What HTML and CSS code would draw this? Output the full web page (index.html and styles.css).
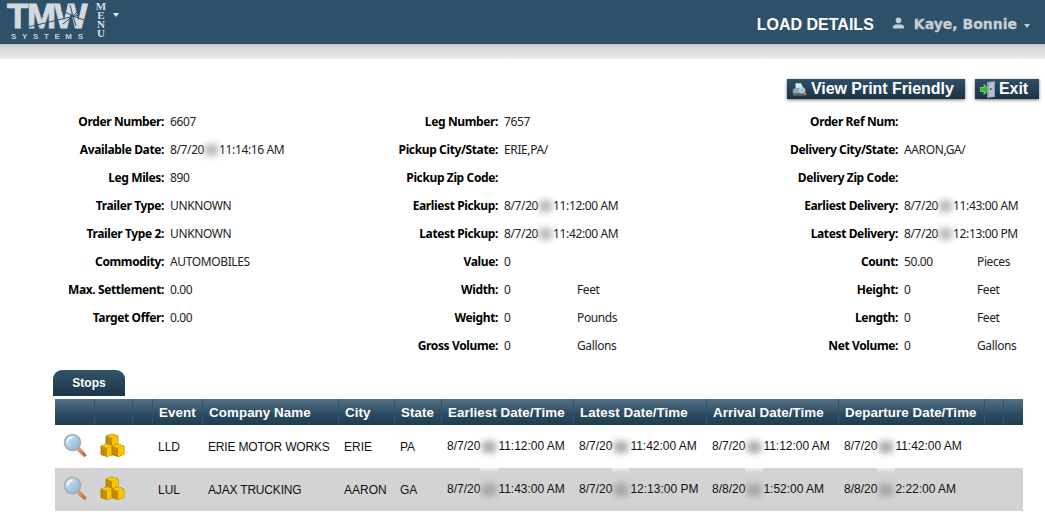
FILE: index.html
```html
<!DOCTYPE html>
<html lang="en">
<head>
<meta charset="utf-8">
<title>Load Details</title>
<link rel="stylesheet" href="styles.css">
</head>
<body>
<svg class="defs" width="0" height="0" aria-hidden="true">
  <defs>
    <linearGradient id="lens" x1="0" y1="0" x2="1" y2="1"><stop offset="0" stop-color="#dcecf5"/><stop offset="1" stop-color="#7db0d2"/></linearGradient>
    <linearGradient id="handle" x1="0" y1="0" x2="1" y2="0"><stop offset="0" stop-color="#f7a15a"/><stop offset="1" stop-color="#e4641c"/></linearGradient>
    <symbol id="magnifier" viewBox="0 0 24 24">
      <path d="M15 15.500l6.500 6.500" stroke="#8a8a8a" stroke-width="3.800" stroke-linecap="round"/>
      <path d="M15.500 16l5.500 5.500" stroke="url(#handle)" stroke-width="2.400" stroke-linecap="round"/>
      <circle cx="9.500" cy="9.500" r="8" fill="url(#lens)" stroke="#a3adb3" stroke-width="1.600"/>
      <path d="M4.500 9a5 5 0 0 1 4.500-4.500" fill="none" stroke="#fff" stroke-width="1.400" stroke-linecap="round"/>
    </symbol>
    <symbol id="cube" viewBox="0 0 14 14">
      <path d="M1 3L7 1l6 2v8.500L7 13.500 1 11.500z" fill="#c48c00" stroke="#a87800" stroke-width=".9" stroke-linejoin="round"/>
      <path d="M1 3L7 1l6 2-6 2z" fill="#f6c80e"/>
      <path d="M7 5l6-2v8.500l-6 2z" fill="#fcc400"/>
    </symbol>
    <symbol id="boxes" viewBox="0 0 25 24">
      <use href="#cube" x="5" y="0" width="14" height="14"/>
      <use href="#cube" x="0" y="10" width="14" height="14"/>
      <use href="#cube" x="11" y="10" width="14" height="14"/>
    </symbol>
  </defs>
</svg>

<header class="topbar">
  <div class="brand">
    <svg class="logo" width="90" height="41" viewBox="0 0 90 41" role="img" aria-label="TMW Systems">
      <text class="logo-mark" x="1" y="27">TMW</text>
      <path d="M22 26L73 14M64 4l3 11 3 10M55 9l12 6 11 4M57 23l10-8 8-8" stroke="#2e5069" stroke-width="1" fill="none"/>
      <text class="logo-sub" x="5" y="38" textLength="72">SYSTEMS</text>
    </svg>
    <div class="menu-word"><span>M</span><span>E</span><span>N</span><span>U</span></div>
    <span class="caret caret-menu"></span>
  </div>
  <div class="session">
    <h1 class="page-title">LOAD DETAILS</h1>
    <svg class="user-icon" width="11" height="12" viewBox="0 0 11 12" aria-hidden="true"><circle cx="5.500" cy="3.400" r="2.800" fill="#c5ced5"/><path d="M0 11.500V10q0-2 3-2.500h5q3 .5 3 2.500v1.500z" fill="#c5ced5"/></svg>
    <span class="user-name">Kaye, Bonnie</span>
    <span class="caret caret-user"></span>
  </div>
</header>
<div class="band"></div>

<nav class="actions">
  <a class="btn btn-print">
    <svg width="15" height="15" viewBox="0 0 17 16" aria-hidden="true">
      <path d="M4 1h6l2 3v4H4z" fill="#dfe7ec"/><path d="M1 8l3-2h8l3 2v5H1z" fill="#95a4ae"/><path d="M1 12h14v3H1z" fill="#5d6b75"/>
      <circle cx="11.500" cy="9" r="3" fill="#8fc1dd" stroke="#dfe7ec"/><path d="M13.500 11l2.500 3" stroke="#e8792a" stroke-width="2"/>
    </svg>
    <span>View Print Friendly</span>
  </a>
  <a class="btn btn-exit">
    <svg width="17" height="17" viewBox="0 0 17 17" aria-hidden="true">
      <path d="M7 1l8-1v16l-8 1z" fill="#8d9db8"/><path d="M9 2l5-1v14l-5 1z" fill="#b5c2d6"/><rect x="10" y="7" width="1.500" height="2" fill="#4a5670"/>
      <path d="M0 6.500h4V3.500l5 5-5 5v-3H0z" fill="#3dbb2c" stroke="#b6eba8" stroke-width=".6"/>
    </svg>
    <span>Exit</span>
  </a>
</nav>

<section class="fields">
  <div class="field-col col-a">
    <div class="field"><b>Order Number:</b><span>6607</span></div>
    <div class="field"><b>Available Date:</b><span>8/7/20<i class="mask"></i>11:14:16 AM</span></div>
    <div class="field"><b>Leg Miles:</b><span>890</span></div>
    <div class="field"><b>Trailer Type:</b><span>UNKNOWN</span></div>
    <div class="field"><b>Trailer Type 2:</b><span>UNKNOWN</span></div>
    <div class="field"><b>Commodity:</b><span>AUTOMOBILES</span></div>
    <div class="field"><b>Max. Settlement:</b><span>0.00</span></div>
    <div class="field"><b>Target Offer:</b><span>0.00</span></div>
  </div>
  <div class="field-col col-b">
    <div class="field"><b>Leg Number:</b><span>7657</span></div>
    <div class="field"><b>Pickup City/State:</b><span>ERIE,PA/</span></div>
    <div class="field"><b>Pickup Zip Code:</b><span></span></div>
    <div class="field"><b>Earliest Pickup:</b><span>8/7/20<i class="mask"></i>11:12:00 AM</span></div>
    <div class="field"><b>Latest Pickup:</b><span>8/7/20<i class="mask"></i>11:42:00 AM</span></div>
    <div class="field"><b>Value:</b><span>0</span></div>
    <div class="field"><b>Width:</b><span>0</span><span>Feet</span></div>
    <div class="field"><b>Weight:</b><span>0</span><span>Pounds</span></div>
    <div class="field"><b>Gross Volume:</b><span>0</span><span>Gallons</span></div>
  </div>
  <div class="field-col col-c">
    <div class="field"><b>Order Ref Num:</b><span></span></div>
    <div class="field"><b>Delivery City/State:</b><span>AARON,GA/</span></div>
    <div class="field"><b>Delivery Zip Code:</b><span></span></div>
    <div class="field"><b>Earliest Delivery:</b><span>8/7/20<i class="mask"></i>11:43:00 AM</span></div>
    <div class="field"><b>Latest Delivery:</b><span>8/7/20<i class="mask"></i>12:13:00 PM</span></div>
    <div class="field"><b>Count:</b><span>50.00</span><span>Pieces</span></div>
    <div class="field"><b>Height:</b><span>0</span><span>Feet</span></div>
    <div class="field"><b>Length:</b><span>0</span><span>Feet</span></div>
    <div class="field"><b>Net Volume:</b><span>0</span><span>Gallons</span></div>
  </div>
</section>

<div class="tab">Stops</div>
<table class="stops">
  <colgroup>
    <col class="c-icon"><col class="c-icon2"><col class="c-blank"><col class="c-event"><col class="c-company"><col class="c-city"><col class="c-state"><col class="c-date1"><col class="c-date2"><col class="c-date3"><col class="c-date4"><col class="c-tail1"><col class="c-tail2">
  </colgroup>
  <thead>
    <tr><th></th><th></th><th></th><th>Event</th><th>Company Name</th><th>City</th><th>State</th><th>Earliest Date/Time</th><th>Latest Date/Time</th><th>Arrival Date/Time</th><th>Departure Date/Time</th><th></th><th></th></tr>
  </thead>
  <tbody>
    <tr>
      <td class="icon-cell"><svg class="ico-mag"><use href="#magnifier"/></svg></td>
      <td class="icon-cell"><svg class="ico-box"><use href="#boxes"/></svg></td>
      <td></td><td>LLD</td><td class="tight">ERIE MOTOR WORKS</td><td>ERIE</td><td>PA</td>
      <td>8/7/20<i class="mask smear"></i>11:12:00 AM</td>
      <td>8/7/20<i class="mask smear"></i>11:42:00 AM</td>
      <td>8/7/20<i class="mask smear"></i>11:12:00 AM</td>
      <td>8/7/20<i class="mask smear"></i>11:42:00 AM</td>
      <td></td><td></td>
    </tr>
    <tr class="alt">
      <td class="icon-cell"><svg class="ico-mag"><use href="#magnifier"/></svg></td>
      <td class="icon-cell"><svg class="ico-box"><use href="#boxes"/></svg></td>
      <td></td><td>LUL</td><td class="tight">AJAX TRUCKING</td><td>AARON</td><td>GA</td>
      <td>8/7/20<i class="mask"></i>11:43:00 AM</td>
      <td>8/7/20<i class="mask"></i>12:13:00 PM</td>
      <td>8/8/20<i class="mask"></i>1:52:00 AM</td>
      <td>8/8/20<i class="mask"></i>2:22:00 AM</td>
      <td></td><td></td>
    </tr>
  </tbody>
</table>
</body>
</html>
```

FILE: styles.css
```css
* { box-sizing: border-box; }
html, body { margin: 0; padding: 0; background: #fff; overflow: hidden; }
body { width: 1045px; height: 525px; color: #111; font-family: "Liberation Sans", Arial, sans-serif; }
.defs { position: absolute; }

.topbar { height: 44px; background: #2e5069; display: flex; justify-content: space-between; align-items: flex-start; border-bottom: 1px solid #2a4355; }
.brand { display: flex; align-items: flex-start; padding-left: 6px; }
.logo { margin-top: 1px; display: block; }
.logo-mark { font: 700 35px "Liberation Sans", Arial, sans-serif; letter-spacing: -1.5px; fill: #d3dadf; stroke: #d3dadf; stroke-width: .9px; }
.logo-sub { font: 700 8px "Liberation Sans", Arial, sans-serif; fill: #c4ced5; }
.menu-word { display: flex; flex-direction: column; align-items: center; width: 12px; margin: 2px 0 0 -1px; font: 700 11px/9px "Liberation Serif", serif; color: #d8dfe4; }
.caret { display: block; width: 0; height: 0; border-left: 3px solid transparent; border-right: 3px solid transparent; border-top: 4px solid #e4e8ea; }
.caret-menu { margin: 13px 0 0 6px; }
.session { display: flex; align-items: center; height: 44px; padding-right: 15px; padding-top: 5px; }
.page-title { margin: 0 19px 0 0; font: 700 16px/20px "Liberation Sans", Arial, sans-serif; color: #fff; }
.user-icon { margin-right: 10px; margin-top: -3px; }
.user-name { margin-top: -2px; font: 700 14px/20px "DejaVu Sans", sans-serif; color: #c5ced5; -webkit-text-stroke: .3px #c5ced5; }
.caret-user { margin-left: 7px; margin-top: 2px; border-top-color: #c5ced5; }

.band { height: 15px; background: linear-gradient(#c6c6c6, #dcdcdc 35%, #e6e6e6 85%, #f3f3f3); }

.actions { display: flex; justify-content: flex-end; gap: 10px; padding: 20px 6px 0 0; height: 48px; }
.btn { display: flex; align-items: center; height: 20px; color: #fff; font-weight: 700; font-size: 16px; line-height: 20px; letter-spacing: -.05px; background: linear-gradient(#2f5068, #1b3346); box-shadow: 0 1px 3px rgba(0,0,0,.55); }
.btn svg { flex: none; }
.btn-print { width: 178px; padding-left: 5px; gap: 4px; }
.btn-exit { width: 64px; padding-left: 5px; gap: 2px; }

.fields { display: grid; grid-template-columns: 334px 400px 311px; height: 252px; }
.field { display: grid; grid-template-columns: 164px 73px auto; height: 28px; padding-top: 1px; align-items: center; font: 12px/16px "Noto Sans", sans-serif; letter-spacing: -.38px; color: #222; }
.field b { text-align: right; color: #000; white-space: nowrap; }
.field span { white-space: nowrap; padding-left: 6px; }

.mask { display: inline-block; position: relative; width: 15px; height: 14px; vertical-align: middle; font-style: normal; }
.mask::before { content: ""; position: absolute; inset: 1px; background: #aaa; filter: blur(3px); opacity: .8; }
.stops .mask { width: 18px; }
.stops .mask::before { inset: 1px 2px; background: #999; }
.mask.smear::after { content: ""; position: absolute; left: 0; right: 0; top: 23px; height: 10px; background: linear-gradient(rgba(255,255,255,.7) 50%, rgba(255,255,255,.55) 55%, rgba(255,255,255,0)); }

.tab { width: 72px; height: 26px; margin: 11px 0 3px 53px; border-radius: 9px 9px 0 0; background: linear-gradient(#325369, #1b3448); color: #fff; font-weight: 700; font-size: 12px; line-height: 26px; text-align: center; }

.stops { table-layout: fixed; width: 968px; margin-left: 55px; border-collapse: collapse; font-size: 12px; }
.c-icon { width: 39px; } .c-icon2 { width: 38px; } .c-blank { width: 20px; }
.c-event { width: 50px; } .c-company { width: 136px; } .c-city { width: 56px; } .c-state { width: 47px; }
.c-date1 { width: 132px; } .c-date2 { width: 133px; } .c-date3 { width: 132px; } .c-date4 { width: 146px; } .c-tail1 { width: 19px; } .c-tail2 { width: 20px; }
.stops th { height: 26px; padding: 0 0 0 6.6px; text-align: left; color: #fff; font-size: 13.33px; font-weight: 700; letter-spacing: .07px; white-space: nowrap; background: linear-gradient(#557287, #2a4a60 60%, #223c50); border-right: 1px solid #365267; }
.stops th:last-child { border-right: 0; }
.stops td { height: 43px; padding: 0 0 0 6px; white-space: nowrap; color: #111; }
.stops .tight { letter-spacing: -.18px; }
.alt td { background: #d3d3d3; }
.stops .icon-cell { padding: 0; }
.ico-mag { display: block; width: 24px; height: 24px; margin: -4px 0 0 8px; }
.ico-box { display: block; width: 25px; height: 24px; margin: -4px 0 0 6px; }
```
